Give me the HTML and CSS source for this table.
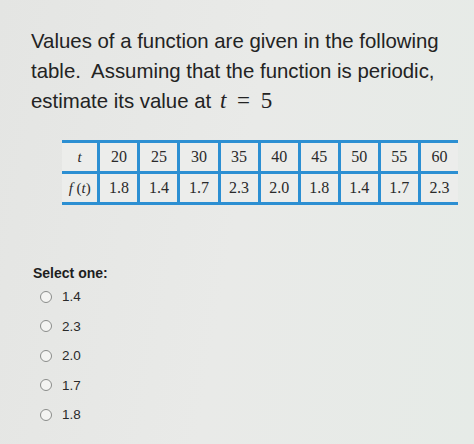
FILE: index.html
```html
<!DOCTYPE html>
<html>
<head>
<meta charset="utf-8">
<link rel="stylesheet" href="styles.css">
</head>
<body>
<div class="page">
  <p class="question">Values of a function are given in the following table.&nbsp; Assuming that the function is periodic, estimate its value at <i class="math">t</i><span class="math"> = 5</span></p>
  <table class="data">
    <tr><td class="hd"><i>t</i></td><td>20</td><td>25</td><td>30</td><td>35</td><td>40</td><td>45</td><td>50</td><td>55</td><td>60</td></tr>
    <tr><td class="hd"><i>f</i> (<i>t</i>)</td><td>1.8</td><td>1.4</td><td>1.7</td><td>2.3</td><td>2.0</td><td>1.8</td><td>1.4</td><td>1.7</td><td>2.3</td></tr>
  </table>
  <div class="answers">
    <div class="prompt">Select one:</div>
    <label class="opt"><span class="radio"></span>1.4</label>
    <label class="opt"><span class="radio"></span>2.3</label>
    <label class="opt"><span class="radio"></span>2.0</label>
    <label class="opt"><span class="radio"></span>1.7</label>
    <label class="opt"><span class="radio"></span>1.8</label>
  </div>
</div>
</body>
</html>
```
FILE: styles.css
```css
html, body {
  margin: 0;
  padding: 0;
}
body {
  width: 474px;
  height: 444px;
  overflow: hidden;
  background: linear-gradient(100deg, #e4e5e3 0%, #e9eae8 50%, #e6ebe7 100%);
  font-family: "Liberation Sans", Arial, sans-serif;
  color: #232323;
}
.page {
  padding: 26px 0 0 31px;
}
.question {
  margin: 0;
  width: 425px;
  font-size: 20.4px;
  line-height: 30px;
}
.math {
  font-family: "Liberation Serif", "Times New Roman", serif;
  font-size: 23px;
  line-height: 1;
  word-spacing: 5px;
}
i.math {
  margin-left: 3px;
}
.data {
  margin: 24px 0 0 31px;
  border-collapse: collapse;
  width: 396px;
  font-family: "Liberation Serif", "Times New Roman", serif;
  font-size: 16px;
  color: #2a2a2a;
}
.data td {
  border: 3px solid #2c8fd2;
  background: #ecedeb;
  text-align: center;
  height: 28px;
  padding: 0;
  width: 40px;
}
.data td:first-child {
  border-left: none;
  width: 39px;
}
.data td:last-child {
  border-right: none;
}
.data .hd {
  font-size: 15px;
}
.answers {
  margin-top: 59px;
  padding-left: 2px;
}
.prompt {
  font-size: 14px;
  font-weight: bold;
  height: 18px;
  line-height: 18px;
  color: #1e1e1e;
}
.opt {
  display: flex;
  align-items: center;
  gap: 10px;
  height: 29.5px;
  padding-left: 7px;
  font-size: 13.5px;
  color: #2a2a2a;
}
.radio {
  width: 10px;
  height: 10px;
  border: 1.5px solid #8a8c8a;
  border-radius: 50%;
  background: #f4f4f2;
}
```
